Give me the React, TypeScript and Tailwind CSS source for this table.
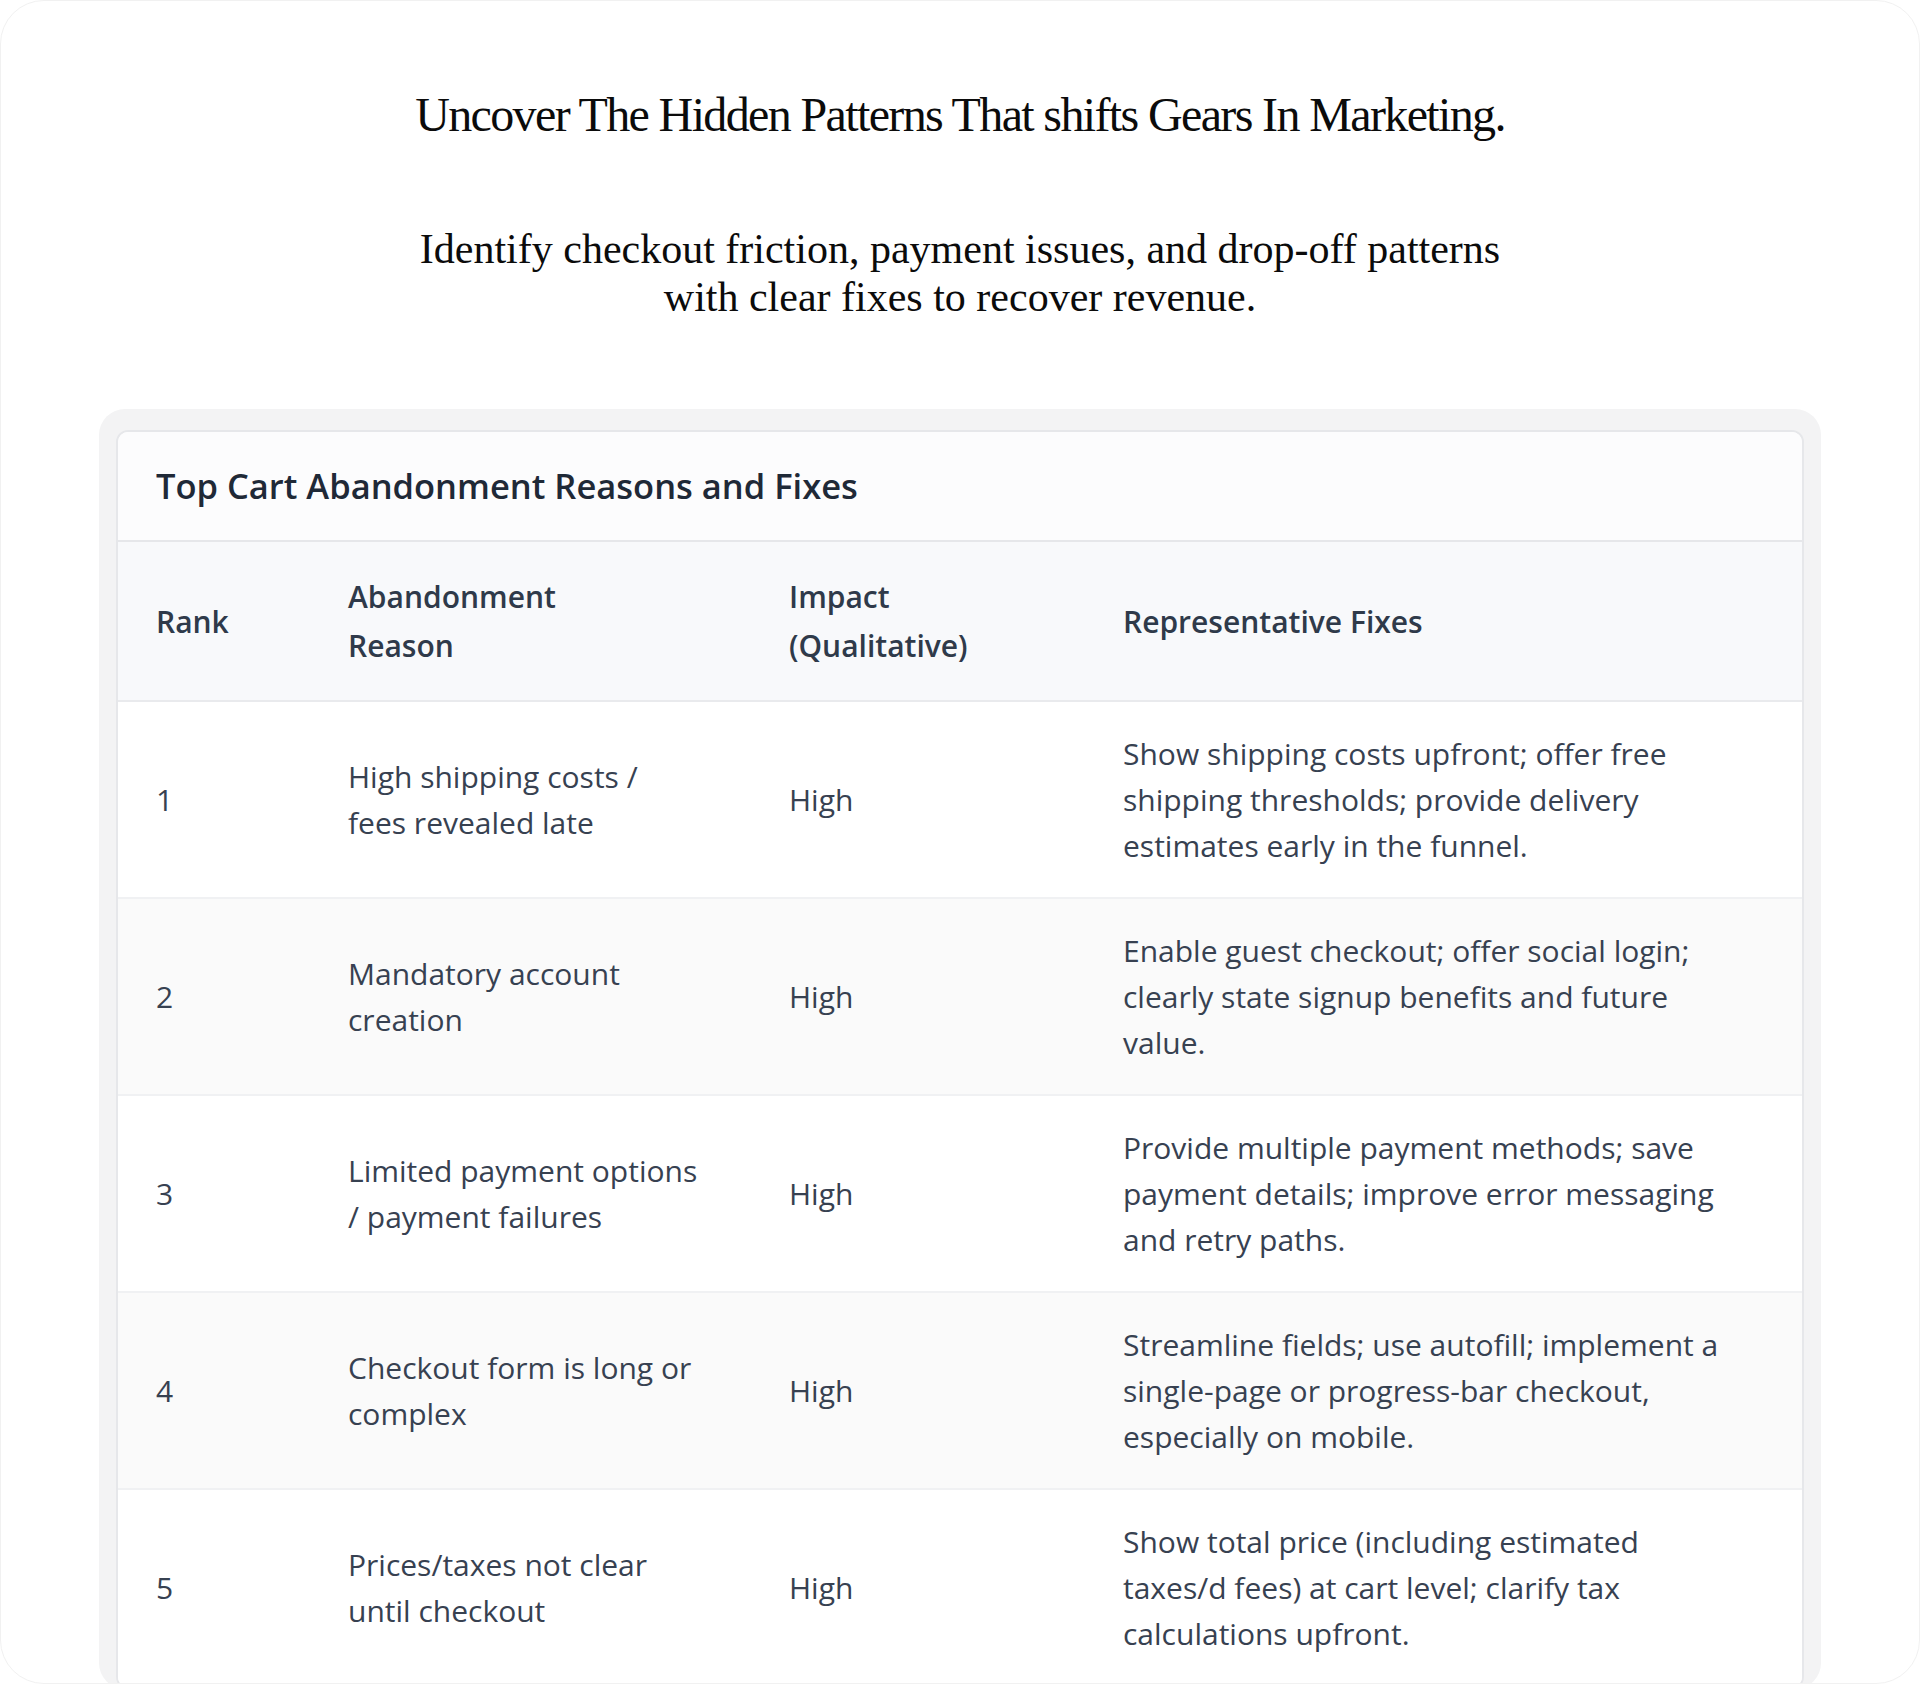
import React from "react";

type Row = { rank: number; reason: string; impact: string; fix: string };

const ROWS: Row[] = [
  {
    rank: 1,
    reason: "High shipping costs / fees revealed late",
    impact: "High",
    fix: "Show shipping costs upfront; offer free shipping thresholds; provide delivery estimates early in the funnel.",
  },
  {
    rank: 2,
    reason: "Mandatory account creation",
    impact: "High",
    fix: "Enable guest checkout; offer social login; clearly state signup benefits and future value.",
  },
  {
    rank: 3,
    reason: "Limited payment options / payment failures",
    impact: "High",
    fix: "Provide multiple payment methods; save payment details; improve error messaging and retry paths.",
  },
  {
    rank: 4,
    reason: "Checkout form is long or complex",
    impact: "High",
    fix: "Streamline fields; use autofill; implement a single-page or progress-bar checkout, especially on mobile.",
  },
  {
    rank: 5,
    reason: "Prices/taxes not clear until checkout",
    impact: "High",
    fix: "Show total price (including estimated taxes/d fees) at cart level; clarify tax calculations upfront.",
  },
];

const serif = { fontFamily: '"Liberation Serif", "DejaVu Serif", serif' };

export default function App() {
  return (
    <div className="h-[1684px] w-full overflow-hidden bg-white">
      <div className="h-full w-full overflow-hidden rounded-[44px] border border-[#f1f1f1] bg-white">
        {/* hero */}
        <div className="flex flex-col items-center pt-[82px] text-center text-[#0b0b0b]" style={serif}>
          <h1 className="text-[48px] leading-[64px] tracking-[-0.034em]">
            Uncover The Hidden Patterns That shifts Gears In Marketing.
          </h1>
          <p className="mt-[78px] w-[1200px] text-[42px] leading-[48px]">
            Identify checkout friction, payment issues, and drop-off patterns
            <br />
            with clear fixes to recover revenue.
          </p>
        </div>

        {/* table card */}
        <div className="mx-[98px] mt-[88px] rounded-[26px] bg-[#f3f3f4] px-[17px] pt-[21px]">
          <div
            className="overflow-hidden rounded-[12px] border-2 border-[#e6e7ea] bg-white text-[#374151]"
            style={{ fontFamily: '"Open Sans", "Noto Sans", sans-serif' }}
          >
            <div className="flex h-[110px] items-center border-b-2 border-[#e6e7ea] bg-[#fcfcfd] px-[38px]">
              <h2 className="text-[34.5px] font-semibold text-[#1f2937]">Top Cart Abandonment Reasons and Fixes</h2>
            </div>
            <table className="w-full table-fixed border-collapse text-left">
              <colgroup>
                <col className="w-[190px]" />
                <col className="w-[441px]" />
                <col className="w-[334px]" />
                <col />
              </colgroup>
              <thead>
                <tr className="h-[159px] border-b-2 border-[#e9eaed] bg-[#f8f9fb] text-[30px] font-semibold leading-[49px] text-[#2f3a4a]">
                  <th className="pl-[38px] pr-[40px] font-semibold">Rank</th>
                  <th className="pl-[40px] pr-[40px] font-semibold">
                    Abandonment
                    <br />
                    Reason
                  </th>
                  <th className="pl-[40px] pr-[40px] font-semibold">
                    Impact
                    <br />
                    (Qualitative)
                  </th>
                  <th className="pl-[40px] pr-[40px] font-semibold">Representative Fixes</th>
                </tr>
              </thead>
              <tbody className="text-[30px] leading-[46px]">
                {ROWS.map((r, i) => (
                  <tr
                    key={r.rank}
                    className={`h-[197px] border-b-2 border-[#f0f1f3] ${i % 2 === 1 ? "bg-[#fafafa]" : "bg-white"}`}
                  >
                    <td className="pl-[38px] pr-[40px] align-middle">{r.rank}</td>
                    <td className="pl-[40px] pr-[50px] align-middle">{r.reason}</td>
                    <td className="pl-[40px] pr-[40px] align-middle">{r.impact}</td>
                    <td className="py-[27px] pl-[40px] pr-[64px] align-middle">{r.fix}</td>
                  </tr>
                ))}
              </tbody>
            </table>
          </div>
        </div>
      </div>
    </div>
  );
}
